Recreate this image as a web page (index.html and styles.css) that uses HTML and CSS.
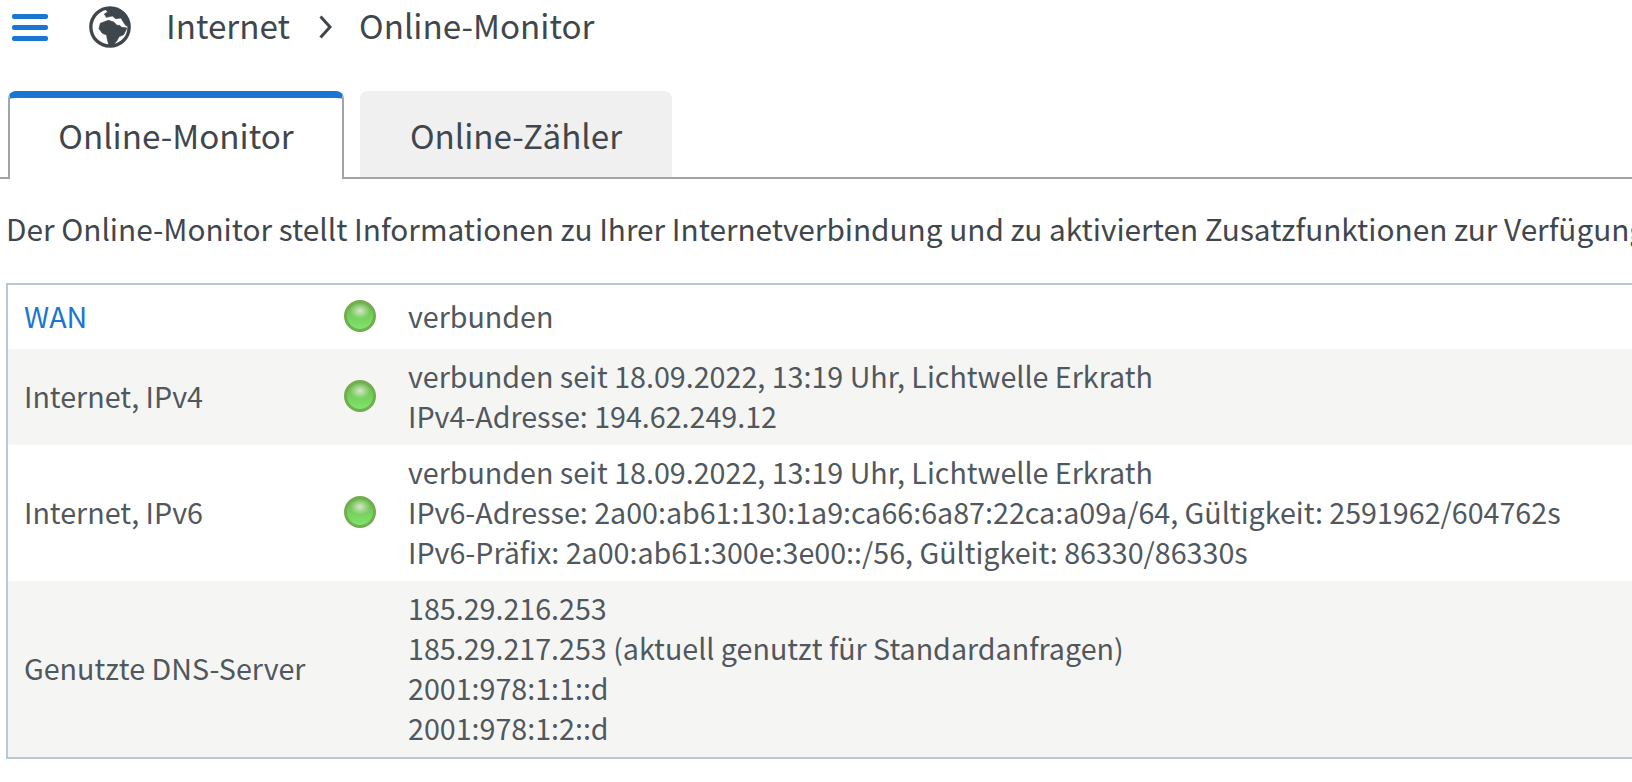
FILE: index.html
```html
<!DOCTYPE html>
<html lang="de">
<head>
    <meta charset="UTF-8">
    <title>Online-Monitor</title>
    <link rel="stylesheet" href="styles.css">
</head>
<body>
<div class="header">
    <div class="menu-btn"><span></span><span></span><span></span></div>
    <svg class="globe" viewBox="0 0 126 126">
        <circle cx="63" cy="63" r="57.5" fill="#fff" stroke="#3f474d" stroke-width="10"/>
        <path fill="#3f474d" stroke="#3f474d" stroke-width="2" stroke-linejoin="round" d="M48 8L56 18L46 24L52 34L70 30L80 38L96 36L108 56L120 64L120 50L105 20L80 6Z"/>
        <path fill="#3f474d" stroke="#3f474d" stroke-width="2" stroke-linejoin="round" d="M34 52L58 43L74 48L84 58L92 58L98 64L114 66L104 86L90 92L84 104L70 120L60 120L54 96L53 87L40 82L30 68Z"/>
    </svg>
    <div class="crumb">Internet</div>
    <svg class="crumb-sep" viewBox="0 0 13 24">
        <path d="M1.5 1.5L11 12L1.5 22.5" fill="none" stroke="#3f474d" stroke-width="3"/>
    </svg>
    <div class="crumb">Online-Monitor</div>
</div>

<div class="tabs">
    <div class="tab active">Online-Monitor</div>
    <div class="tab">Online-Zähler</div>
</div>

<p class="intro">Der Online-Monitor stellt Informationen zu Ihrer Internetverbindung und zu aktivierten Zusatzfunktionen zur Verfügung.</p>

<div class="status-table">
    <div class="row first">
        <div class="name"><a href="#">WAN</a></div>
        <div class="led-cell"><span class="led"></span></div>
        <div class="info">verbunden</div>
    </div>
    <div class="row alt">
        <div class="name">Internet, IPv4</div>
        <div class="led-cell"><span class="led"></span></div>
        <div class="info">
            verbunden seit 18.09.2022, 13:19 Uhr, Lichtwelle Erkrath<br>
            IPv4-Adresse: 194.62.249.12
        </div>
    </div>
    <div class="row">
        <div class="name">Internet, IPv6</div>
        <div class="led-cell"><span class="led"></span></div>
        <div class="info">
            verbunden seit 18.09.2022, 13:19 Uhr, Lichtwelle Erkrath<br>
            IPv6-Adresse: 2a00:ab61:130:1a9:ca66:6a87:22ca:a09a/64, Gültigkeit: 2591962/604762s<br>
            IPv6-Präfix: 2a00:ab61:300e:3e00::/56, Gültigkeit: 86330/86330s
        </div>
    </div>
    <div class="row alt">
        <div class="name">Genutzte DNS-Server</div>
        <div class="led-cell"></div>
        <div class="info">
            185.29.216.253<br>
            185.29.217.253 (aktuell genutzt für Standardanfragen)<br>
            2001:978:1:1::d<br>
            2001:978:1:2::d
        </div>
    </div>
</div>
</body>
</html>
```

FILE: styles.css
```css
html, body {
    overflow: hidden;
}
body {
    font-family: "Noto Sans CJK SC", "Noto Sans", sans-serif;
    margin: 0;
    background-color: #fff;
    color: #3f474d;
    font-size: 28.65px;
    height: 782px;
}
.header {
    display: flex;
    align-items: center;
    height: 54px;
    padding-left: 12px;
}
.menu-btn {
    display: flex;
    flex-direction: column;
    justify-content: space-between;
    width: 36px;
    height: 27px;
}
.menu-btn span {
    display: block;
    height: 5px;
    border-radius: 2px;
    background-color: #1976d2;
}
.globe {
    width: 42px;
    height: 42px;
    margin-left: 41px;
}
.crumb {
    font-size: 33.2px;
    line-height: 50px;
    padding-bottom: 4px;
    margin-left: 35px;
}
.crumb-sep {
    width: 13px;
    height: 24px;
    margin-left: 29px;
    margin-right: -8px;
}
.tabs {
    display: flex;
    gap: 16px;
    margin-top: 37px;
    padding-left: 8px;
    border-bottom: 2px solid #a0a5a9;
    height: 86px;
}
.tab {
    width: 312px;
    height: 86px;
    box-sizing: border-box;
    background-color: #f0f0f0;
    border-radius: 8px 8px 0 0;
    font-size: 33.2px;
    line-height: 87px;
    text-align: center;
}
.tab.active {
    width: 336px;
    height: 88px;
    background-color: #fff;
    border: 2px solid #a0a5a9;
    border-top: 7px solid #1976d2;
    border-bottom: none;
    line-height: 73px;
}
.intro {
    margin: 0;
    padding: 29px 0 0 6px;
    font-size: 29.76px;
    line-height: 40px;
    height: 75px;
    white-space: nowrap;
}
.status-table {
    margin-left: 6px;
    width: 1640px;
    border: 2px solid #b8c9d6;
}
.row {
    display: flex;
    align-items: center;
    padding: 7px 0 9px;
    color: #50585e;
    line-height: 40px;
}
.row.first {
    padding: 11px 0 13px;
}
.row.alt {
    background-color: #f5f5f3;
}
.name {
    width: 320px;
    padding-left: 16px;
}
.name a {
    color: #1976d2;
    text-decoration: none;
}
.led-cell {
    width: 64px;
    display: flex;
}
.led {
    display: block;
    width: 32px;
    height: 32px;
    box-sizing: border-box;
    border: 3px solid #72ad50;
    border-radius: 50%;
    background: radial-gradient(ellipse 10px 8px at 50% 30%, #d6e6cc 0%, rgba(214, 230, 204, 0) 100%), linear-gradient(#6cb84c, #7fe56c);
}
.info {
    white-space: nowrap;
}
```
